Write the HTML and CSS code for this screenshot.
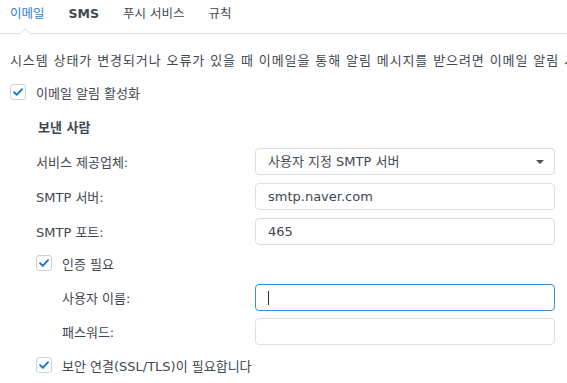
FILE: index.html
```html
<!DOCTYPE html>
<html lang="ko">
<head>
    <meta charset="UTF-8">
    <title>알림 설정</title>
    <link rel="stylesheet" href="styles.css">
</head>
<body>
    <div class="tabs">
        <div class="tab active">이메일</div>
        <div class="tab bold">SMS</div>
        <div class="tab">푸시 서비스</div>
        <div class="tab">규칙</div>
    </div>

    <div class="content">
        <p class="desc">시스템 상태가 변경되거나 오류가 있을 때 이메일을 통해 알림 메시지를 받으려면 이메일 알림 서비스를 활성화하십시오.</p>

        <label class="check">
            <span class="box"><svg viewBox="0 0 16 16" width="16" height="16"><path d="M3.5 8.2 L6.6 11.2 L12.6 4.8" fill="none" stroke="#1a73d9" stroke-width="2.2" stroke-linecap="round" stroke-linejoin="round"/></svg></span>
            이메일 알림 활성화
        </label>

        <div class="section">
            <h4 class="section-title">보낸 사람</h4>

            <div class="row">
                <span class="label">서비스 제공업체:</span>
                <div class="field select">사용자 지정 SMTP 서버<span class="arrow"></span></div>
            </div>
            <div class="row">
                <span class="label">SMTP 서버:</span>
                <div class="field">smtp.naver.com</div>
            </div>
            <div class="row">
                <span class="label">SMTP 포트:</span>
                <div class="field">465</div>
            </div>

            <label class="check sub-check">
                <span class="box"><svg viewBox="0 0 16 16" width="16" height="16"><path d="M3.5 8.2 L6.6 11.2 L12.6 4.8" fill="none" stroke="#1a73d9" stroke-width="2.2" stroke-linecap="round" stroke-linejoin="round"/></svg></span>
                인증 필요
            </label>

            <div class="row sub first">
                <span class="label">사용자 이름:</span>
                <div class="field focus"><span class="caret"></span></div>
            </div>
            <div class="row sub tight">
                <span class="label">패스워드:</span>
                <div class="field"></div>
            </div>

            <label class="check sub-check last">
                <span class="box"><svg viewBox="0 0 16 16" width="16" height="16"><path d="M3.5 8.2 L6.6 11.2 L12.6 4.8" fill="none" stroke="#1a73d9" stroke-width="2.2" stroke-linecap="round" stroke-linejoin="round"/></svg></span>
                보안 연결(SSL/TLS)이 필요합니다
            </label>
        </div>
    </div>
</body>
</html>
```

FILE: styles.css
```css
body { margin: 0; font-family: "DejaVu Sans", "Noto Sans CJK KR", sans-serif; font-size: 13px; color: #3f4850; background: #fff; overflow: hidden; }

.tabs { display: flex; height: 33px; border-bottom: 1px solid #dfe4ea; padding-left: 10px; gap: 24px; }
.tab { position: relative; line-height: 28px; font-size: 12.5px; color: #3f4850; }
.tab.bold { font-weight: bold; }
.tab.active { color: #2f7fd8; }
.tab.active::after {
    content: "";
    position: absolute;
    left: 50%;
    bottom: -1px;
    margin-left: -6px;
    width: 8px;
    height: 8px;
    background: #fff;
    border-left: 1px solid #dfe4ea;
    border-top: 1px solid #dfe4ea;
    transform: translateY(5px) rotate(45deg);
}

.content { padding: 0 0 0 10px; overflow: hidden; }
.desc { margin: 18px 0 0; line-height: 18px; white-space: nowrap; overflow: hidden; letter-spacing: 0.9px; }

.check { display: flex; align-items: center; gap: 10px; margin-top: 14px; height: 16px; }
.box { width: 16px; height: 16px; box-sizing: border-box; border: 1px solid #c9d3dd; border-radius: 3px; background: #fff; display: flex; align-items: center; justify-content: center; }
.box svg { width: 14px; height: 14px; }

.section { padding-left: 26px; }
.section-title { margin: 19px 0 0; font-size: 13px; line-height: 18px; font-weight: bold; padding-left: 2px; }

.row { display: grid; grid-template-columns: 219px 300px; align-items: center; margin-top: 8px; }
.section-title + .row { margin-top: 11px; }
.row.sub { grid-template-columns: 193px 300px; padding-left: 26px; }
.row.first { margin-top: 13px; }
.row.tight { margin-top: 7px; }

.field { position: relative; height: 27px; box-sizing: border-box; border: 1px solid #d7dfe7; border-radius: 4px; padding-left: 12px; line-height: 25px; color: #3f4850; }
.field.focus { border-color: #3a8ae6; }
.caret { display: inline-block; width: 1px; height: 14px; background: #333; vertical-align: middle; margin-top: -2px; }
.arrow {
    position: absolute;
    right: 10px;
    top: 11px;
    border-left: 4px solid transparent;
    border-right: 4px solid transparent;
    border-top: 4px solid #4a525a;
}

.sub-check { margin-top: 10px; }
.sub-check.last { margin-top: 12px; }
```
